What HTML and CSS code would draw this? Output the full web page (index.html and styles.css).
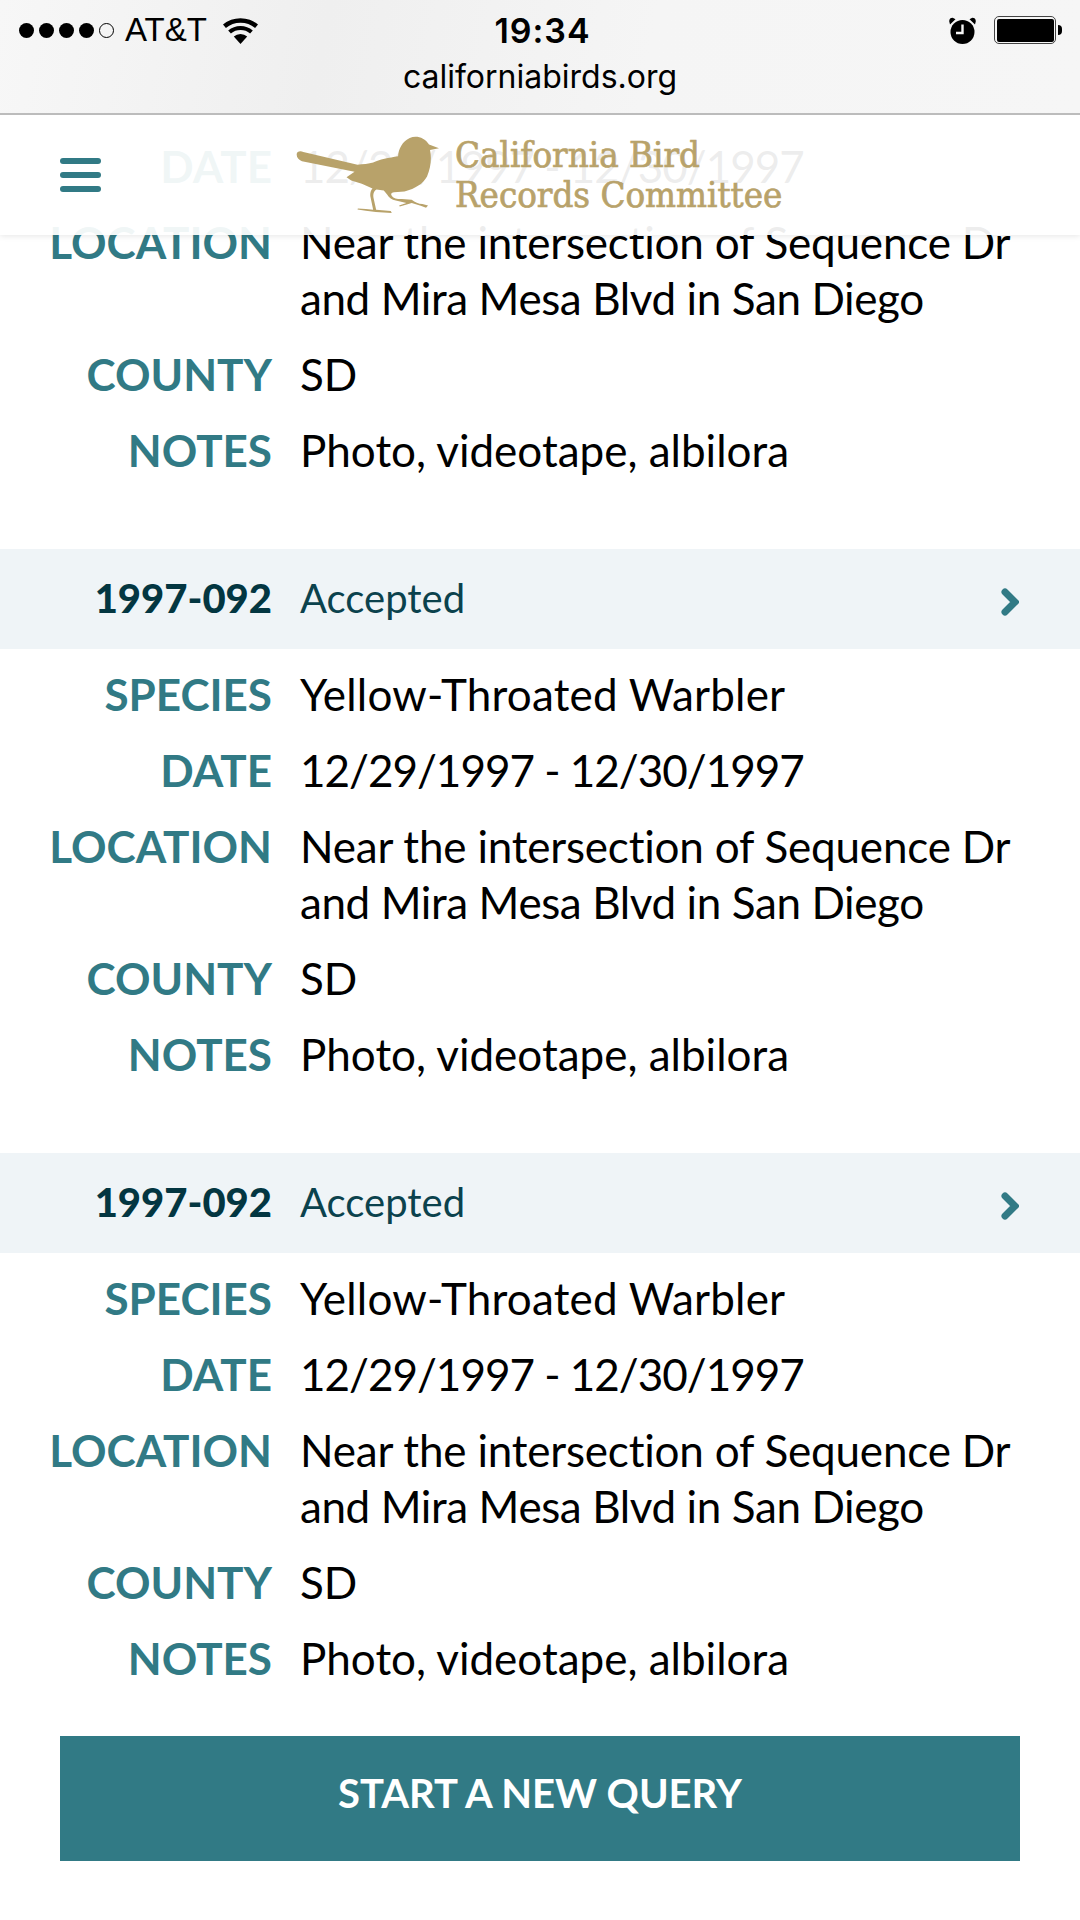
FILE: index.html
```html
<!DOCTYPE html>
<html lang="en">
<head>
    <meta charset="UTF-8">
    <meta name="viewport" content="width=device-width, initial-scale=1.0">
    <title>California Bird Records Committee</title>
    <link rel="stylesheet" href="styles.css">
</head>
<body>
    <div id="outer">
        <div class="browser-bar">
            <div class="status">
                <div class="status-left">
                    <span class="dot"></span><span class="dot"></span><span class="dot"></span><span class="dot"></span><span class="dot empty"></span>
                    <span class="carrier">AT&amp;T</span>
                    <svg class="wifi" viewBox="0 0 35 27">
                        <path d="M17.5 27 10.8 19.6a10 10 0 0 1 13.4 0z"/>
                        <path d="M7.9 16.5 5.2 13.4a19 19 0 0 1 24.6 0l-2.7 3.1a15 15 0 0 0-19.2 0z"/>
                        <path d="M2.9 10.9 0 7.6a27 27 0 0 1 35 0l-2.9 3.3a23 23 0 0 0-29.2 0z"/>
                    </svg>
                </div>
                <div class="time">19:34</div>
                <div class="status-right">
                    <svg class="alarm" viewBox="0 0 27 27">
                        <circle cx="13.5" cy="15" r="12"/>
                        <path d="M1 7.5 6.5 2.2 3.7.8A3.5 3.5 0 0 0 .2 4.2zM26 7.5 20.5 2.2 23.3.8a3.5 3.5 0 0 1 3.5 3.4z"/>
                        <path d="M13.5 7.5v8.5H7" fill="none" stroke="#f5f5f5" stroke-width="2.4"/>
                    </svg>
                    <div class="battery"><div class="battery-fill"></div></div>
                    <div class="battery-nub"></div>
                </div>
            </div>
            <div class="url">californiabirds.org</div>
        </div>

        <header class="site-header">
            <div class="burger"><span></span><span></span><span></span></div>
            <div class="logo">
                <svg class="bird" viewBox="50 47 430 233">
                    <path d="M52 102C52 93 62 90 72 94L235 133C250 131 270 130 282 126 300 117 330 111 357 107 358 85 370 62 392 52 412 44 436 50 450 72L480 83 453 88C458 112 456 140 444 168 432 190 410 204 376 213L345 215C337 216 334 220 338 226 344 234 352 236 368 236L398 238C408 246 418 250 430 251L447 255 441 262 425 256 398 248 383 252 362 258 360 255 382 248 350 240C338 238 330 232 324 222L314 210 292 207C284 212 281 220 283 232L291 268 335 272 338 278 290 275 260 271 235 267 236 264 260 266 282 268 274 230C272 220 274 210 280 204L248 190 216 180 202 170 226 154 68 122C58 118 52 112 52 102Z"/>
                </svg>
                <div class="logo-text">California Bird<br>Records Committee</div>
            </div>
        </header>

        <main class="list">
            <section class="record">
                <div class="record-head">
                    <div class="record-id">1997-092</div>
                    <div class="record-status">Accepted</div>
                    <svg class="chevron" viewBox="0 0 18 28"><path d="M4 4 14 14 4 24"/></svg>
                </div>
                <dl class="fields">
                    <dt>SPECIES</dt><dd class="species">Yellow-Throated Warbler</dd>
                    <dt>DATE</dt><dd class="date">12/29/1997 - 12/30/1997</dd>
                    <dt>LOCATION</dt><dd class="location">Near the intersection of Sequence Dr<br><span>and Mira Mesa Blvd in San Diego</span></dd>
                    <dt>COUNTY</dt><dd>SD</dd>
                    <dt>NOTES</dt><dd>Photo, videotape, albilora</dd>
                </dl>
            </section>
            <section class="record">
                <div class="record-head">
                    <div class="record-id">1997-092</div>
                    <div class="record-status">Accepted</div>
                    <svg class="chevron" viewBox="0 0 18 28"><path d="M4 4 14 14 4 24"/></svg>
                </div>
                <dl class="fields">
                    <dt>SPECIES</dt><dd class="species">Yellow-Throated Warbler</dd>
                    <dt>DATE</dt><dd class="date">12/29/1997 - 12/30/1997</dd>
                    <dt>LOCATION</dt><dd class="location">Near the intersection of Sequence Dr<br><span>and Mira Mesa Blvd in San Diego</span></dd>
                    <dt>COUNTY</dt><dd>SD</dd>
                    <dt>NOTES</dt><dd>Photo, videotape, albilora</dd>
                </dl>
            </section>
            <section class="record last">
                <div class="record-head">
                    <div class="record-id">1997-092</div>
                    <div class="record-status">Accepted</div>
                    <svg class="chevron" viewBox="0 0 18 28"><path d="M4 4 14 14 4 24"/></svg>
                </div>
                <dl class="fields">
                    <dt>SPECIES</dt><dd class="species">Yellow-Throated Warbler</dd>
                    <dt>DATE</dt><dd class="date">12/29/1997 - 12/30/1997</dd>
                    <dt>LOCATION</dt><dd class="location">Near the intersection of Sequence Dr<br><span>and Mira Mesa Blvd in San Diego</span></dd>
                    <dt>COUNTY</dt><dd>SD</dd>
                    <dt>NOTES</dt><dd>Photo, videotape, albilora</dd>
                </dl>
            </section>
            <button class="new-query">START A NEW QUERY</button>
        </main>
    </div>
</body>
</html>
```

FILE: styles.css
```css
:root {
    --teal: #317a85;
    --dark-teal: #033641;
    --gold: #b8a26a;
    --row-bg: #eff4f7;
}

html, body {
    margin: 0;
    padding: 0;
    background: #fff;
}

#outer {
    position: relative;
    width: 1080px;
    height: 1920px;
    overflow: hidden;
    font-family: Lato, "Open Sans", sans-serif;
    font-variant-ligatures: none;
}

/* browser chrome */
.browser-bar {
    position: absolute;
    top: 0;
    left: 0;
    right: 0;
    z-index: 3;
    height: 113px;
    background: linear-gradient(100deg, #f7f7f7 0%, #efefef 30%, #f5f5f5 60%, #f6f6f6 100%);
    border-bottom: 2px solid #bcbcbc;
    color: #000;
    font-family: Inter, "Liberation Sans", sans-serif;
}

.status {
    display: grid;
    grid-template-columns: 1fr auto 1fr;
    align-items: center;
    height: 60px;
    padding: 0 18px 0 19px;
}

.status-left {
    display: flex;
    align-items: center;
}

.dot {
    width: 15px;
    height: 15px;
    margin-right: 5px;
    border-radius: 50%;
    background: #000;
    box-sizing: border-box;
}

.dot.empty {
    background: none;
    border: 1px solid #000;
}

.carrier {
    margin-left: 6px;
    font-family: "Liberation Sans", sans-serif;
    font-size: 33px;
}

.wifi {
    width: 35px;
    height: 27px;
    margin-left: 16px;
}

.time {
    font-size: 34px;
    font-weight: 600;
    letter-spacing: 1px;
    padding-left: 4px;
}

.status-right {
    display: flex;
    align-items: center;
    justify-content: flex-end;
}

.alarm {
    width: 27px;
    height: 27px;
    margin-right: 18px;
}

.battery {
    width: 62px;
    height: 28px;
    box-sizing: border-box;
    border: 1.5px solid #444;
    border-radius: 5px;
    padding: 1.5px;
}

.battery-fill {
    height: 100%;
    background: #000;
    border-radius: 2px;
}

.battery-nub {
    width: 4px;
    height: 10px;
    margin-left: 2px;
    background: #000;
    border-radius: 0 4px 4px 0;
}

.url {
    margin-top: -2px;
    text-align: center;
    font-size: 32px;
    line-height: 38px;
}

.site-header {
    position: absolute;
    top: 115px;
    left: 0;
    right: 0;
    z-index: 2;
    height: 120px;
    display: flex;
    align-items: center;
    background: rgba(255, 255, 255, 0.93);
    box-shadow: 0 1px 6px rgba(0, 0, 0, 0.1);
}

.burger {
    display: flex;
    flex-direction: column;
    gap: 8px;
    width: 41px;
    margin: 0 0 0 60px;
}

.burger span {
    height: 6px;
    border-radius: 3px;
    background: var(--teal);
}

.logo {
    display: flex;
    align-items: center;
    margin-left: 195px;
}

.bird {
    width: 143px;
    height: 78px;
    fill: var(--gold);
}

.logo-text {
    margin: -1px 0 0 16px;
    font-family: "DejaVu Serif Condensed", "DejaVu Serif", serif;
    font-size: 36.3px;
    line-height: 40px;
    color: var(--gold);
    -webkit-text-stroke: 0.7px var(--gold);
}

/* records */
.list {
    margin-top: -55px;
}

.record {
    padding-bottom: 71px;
}

.record.last {
    padding-bottom: 50px;
}

.record-head {
    display: grid;
    grid-template-columns: 272px 1fr 18px;
    column-gap: 28px;
    align-items: center;
    height: 100px;
    padding-right: 61px;
    background: var(--row-bg);
    color: var(--dark-teal);
    font-size: 40px;
}

.record-id {
    padding-bottom: 3px;
    text-align: right;
    font-weight: 900;
}

.record-status {
    padding-bottom: 3px;
    color: #0b424d;
}

.chevron {
    width: 18px;
    height: 28px;
    margin-top: 6px;
    fill: none;
    stroke: var(--teal);
    stroke-width: 7;
    stroke-linecap: round;
    stroke-linejoin: miter;
}

.fields {
    display: grid;
    grid-template-columns: 272px 1fr;
    column-gap: 28px;
    row-gap: 20px;
    margin: 17px 0 0;
    line-height: 56px;
}

.fields dt {
    text-align: right;
    font-size: 44px;
    font-weight: bold;
    color: var(--teal);
}

.fields dd {
    margin: 0;
    font-size: 44px;
    color: #000;
}

.fields dd.species {
    letter-spacing: 0.2px;
}

.fields dd.date {
    letter-spacing: -1px;
}

.fields dd.location {
    letter-spacing: -0.2px;
}

.fields dd.location span {
    letter-spacing: -0.4px;
}

.new-query {
    display: block;
    width: 960px;
    height: 125px;
    margin: 0 60px;
    padding: 0 0 11px;
    border: none;
    background: var(--teal);
    color: #fff;
    font-family: Lato, sans-serif;
    font-size: 40px;
    font-weight: bold;
}
```
